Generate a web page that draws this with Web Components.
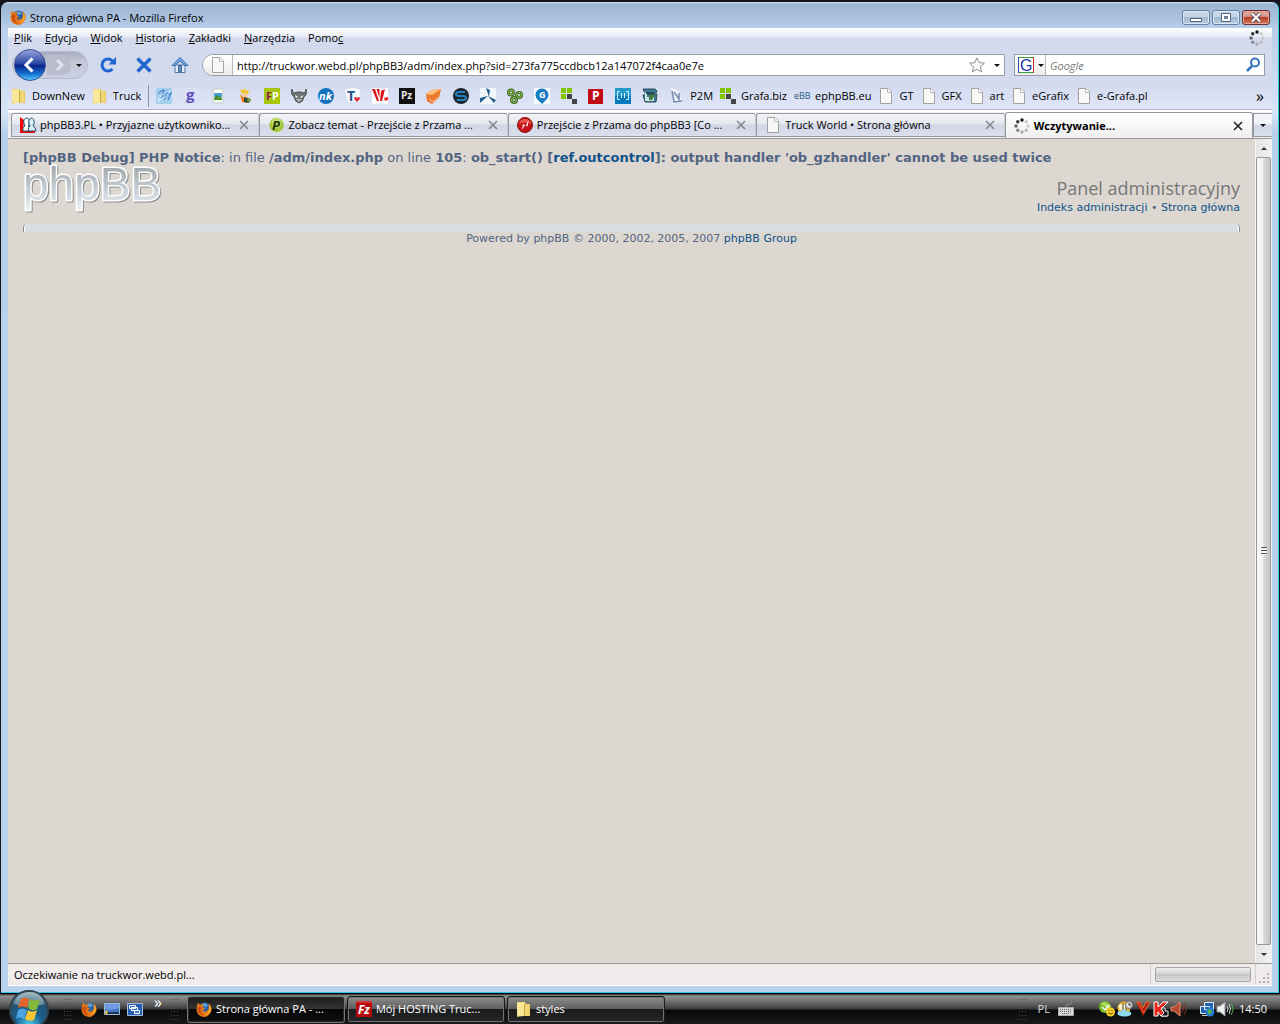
<!DOCTYPE html>
<html lang="pl">
<head>
<meta charset="utf-8">
<title>Strona główna PA</title>
<style>
  html, body { height: 100%; margin: 0; }
  body {
    --ui-font: "Open Sans", "Noto Sans", sans-serif;
    --page-font: "DejaVu Sans", sans-serif;
    display: flex;
    flex-direction: column;
    background: #15131c;
    color: #000;
    font: 11px/16px var(--ui-font);
    overflow: hidden;
  }
</style>
</head>
<body>

<browser-window caption="Strona główna PA - Mozilla Firefox">
  <menu-bar></menu-bar>
  <nav-bar url="http://truckwor.webd.pl/phpBB3/adm/index.php?sid=273fa775ccdbcb12a147072f4caa0e7e"></nav-bar>
  <bookmarks-bar></bookmarks-bar>
  <tab-strip>
    <browser-tab icon="phpbb">phpBB3.PL • Przyjazne użytkowniko...</browser-tab>
    <browser-tab icon="przemo">Zobacz temat - Przejście z Przama ...</browser-tab>
    <browser-tab icon="flash">Przejście z Przama do phpBB3 [Co ...</browser-tab>
    <browser-tab icon="page">Truck World • Strona główna</browser-tab>
    <browser-tab icon="throbber" active>Wczytywanie...</browser-tab>
  </tab-strip>
  <scroll-view>
    <admin-page></admin-page>
  </scroll-view>
  <status-bar>Oczekiwanie na truckwor.webd.pl...</status-bar>
</browser-window>

<task-bar>
  <task-button icon="firefox" active>Strona główna PA - ...</task-button>
  <task-button icon="filezilla">Mój HOSTING Truc...</task-button>
  <task-button icon="folder">styles</task-button>
</task-bar>

<script>
  const dots = (() => {
    const shades = ['#111', '#ccc', '#ccc', '#bbb', '#aaa', '#888', '#666', '#333'];
    return shades.map((c, i) => {
      const a = i * Math.PI / 4;
      return `<circle cx="${8 + 6 * Math.sin(a)}" cy="${8 - 6 * Math.cos(a)}" r="1.7" fill="${c}"/>`;
    }).join('');
  })();

  const label = (text, x, y, size, fill, extra = '') =>
    `<text x="${x}" y="${y}" font-size="${size}" fill="${fill}" font-family="Open Sans, sans-serif" font-weight="700" ${extra}>${text}</text>`;

  // every icon is drawn on a 16x16 grid
  const ICONS = {
    firefox: `
      <circle cx="8.5" cy="7.5" r="6" fill="#2b62a8"/><path d="M6 3q3-2 6 1l-2 2-3-.5z" fill="#5fa3d8"/>
      <path d="M1 5Q1 3 2.500 1.500L4 4Q6 2.500 8 3.500 6 5 6.500 6.500L9 7Q8.500 9 6.500 9 8 11.500 11 10 13.500 8 12.500 4L13 2.500Q17 7 15 11 12.500 16 8 16 1 15 .5 9Z" fill="#e87816"/>
      <path d="M1.500 8Q2.500 14 8 14.500 4.500 12 4.500 8.500L6 7 3 5Z" fill="#c94d10"/><path d="M13 3.500Q16 8 13.500 11.500 11.500 14 8.500 14 14 12 13.500 6Z" fill="#fcc53c"/>`,
    folder: `
      <path d="M1 1h8l1 2h4v12H4l-3 1z" fill="#e9c95e"/><path d="M1.500 1.500h7V15l-6 .5z" fill="#f9e797"/>
      <path d="M9 3l4 1v11H9z" fill="#f0d675"/><path d="M8.500 3v12" stroke="#c9a63d"/><path d="M2 2.500v12" stroke="#fff6c5"/>`,
    page: `<path d="M2.500.5h7.500l3.500 3.500v11.500h-11z" fill="#f8f8f6" stroke="#a2a2a0"/><path d="M9.500.5v4h4" fill="#fff" stroke="#b5b5b3"/>`,
    throbber: dots,
    phpbb: `
      <path d="M0 0l4 3-1 10h12v3H0z" fill="#f00707"/><path d="M3 14Q2 10 5 9 2 3 6 1q4 0 3 5 1 3-1 3 3 1 3 5z" fill="#fff" stroke="#24516d"/>
      <path d="M8 14Q8 10 10 9 7 3 11 1q4 0 3 6-1 2-1 2 3 1 3 5z" fill="#d7eef8" stroke="#24516d"/>`,
    przemo: `<circle cx="8.500" cy="8" r="7.200" fill="#a5c739"/><circle cx="8.500" cy="6" r="5" fill="#bfdb69"/>${label('P', 4, 13, 13, '#213304', 'font-style="italic"')}`,
    flash: `<circle cx="8" cy="8" r="7.500" fill="#c51214" stroke="#8d1010"/><path d="M8 2a6 5 0 0 1 6 5q-6-3-12 0a6 5 0 0 1 6-5" fill="#e75551"/><path d="M5 13l1-6 3 1.500L11.500 3 10.500 9.500 8 8z" fill="#fff"/>`,
    filezilla: `<path d="M0 0h16v16H0z" fill="#b40a0d"/><path d="M0 0h16v2H0z" fill="#d13334"/>${label('Fz', 2, 13, 12, '#fff', 'font-style="italic"')}`,
    feather: `<path d="M0 0h16v16H0z" fill="#a6cff0"/><path d="M2 6Q5 2 8 2L5 10Q9 3 13 2L8 12Q12 6 15 5L12 12" fill="none" stroke="#3f82c7" stroke-width="1.200"/><path d="M2 14q2-8 12-12-2 8-9 9z" fill="#6faee2" fill-opacity=".6" stroke="#e6f3fc"/>`,
    g: `<path d="M0 0h16v16H0z" fill="#dbe0f5"/>${label('g', 3, 12, 15, '#5b4eba')}`,
    photo: `<path d="M3 1h10v14H3z" fill="#f8faf8" stroke="#c5cac7"/><path d="M4 5h8v4H4z" fill="#469cd9"/><path d="M4 10l3-3 5 3v2H4z" fill="#4b9129"/>`,
    naruto: `<path d="M3 1l3 2 1-3 2 3 3-1-1 4H5z" fill="#f4c51c"/><path d="M5 5h5l1 4H6z" fill="#f5cd9c"/><path d="M3 6l3 3 6 1-2 5-5-1z" fill="#ee7e1c"/><path d="M7 9l6 2-1 4-5-1z" fill="#304b32"/><circle cx="12" cy="12" r="2" fill="#719c4a"/>`,
    fp: `<path d="M0 0h16v16H0z" fill="#a8c60d"/>${label('F<tspan fill="#fff">P</tspan>', 2, 12, 11, '#8d154b')}`,
    demon: `<path d="M1 1q0 4 3 4l2-1h4l2 1q3 0 3-4 2 5-2 8-1 5-5 6-4-1-5-6-4-3-2-8z" fill="#6f7477" stroke="#4d5356"/><path d="M4 7l3 2-2 1zM12 7L9 9l2 1z" fill="#fff"/><path d="M5 11h6l-3 3z" fill="#bbb"/>`,
    nk: `<circle cx="8" cy="8" r="8" fill="#1672bd"/>${label('nk', 1, 12, 11, '#fff', 'font-style="italic"')}`,
    theart: `<path d="M0 2q8-4 15 0v12H3z" fill="#f5f8fc"/>${label('T', 2, 13, 14, '#28527f')}<path d="M9 10q2-2 3 0 2-2 3 0 0 2-3 4-3-2-3-4" fill="#df3345"/>`,
    vred: `<path d="M0 0h16v16H0z" fill="#fff"/><path d="M0 1h3l4 12H5zM4.500 1h3v9zM9 3l4-2-3 12H8z" fill="#dc1217"/><path d="M12 10l4-1v3l-3 1z" fill="#e22"/>`,
    pz: `<path d="M0 0h16v16H0z" fill="#111"/>${label('Pz', 2, 11, 10, '#e8e8e8')}`,
    box: `<path d="M0 6l5-4 10-1-2 9-7 6-5-3z" fill="#ed762d"/><path d="M0 6l6 1 9-6-10 1z" fill="#ffc17c"/><path d="M3 11l4 3 6-5" fill="none" stroke="#fbd4a6"/>`,
    s: `<circle cx="8" cy="8" r="8" fill="#1d252d"/><path d="M12 4H6Q3 4 3 6t3 2h4q3 0 3 2t-3 2H4" fill="none" stroke="#2683c2" stroke-width="2"/>`,
    fan: `<path d="M0 0h16v16H0z" fill="#f4f7fa"/><path d="M6 0l4 2-1 7zM8 8l-8 7V10zM8 8l8 4-2 3z" fill="#24608f"/>`,
    links: `<g fill="none" stroke="#466f24" stroke-width="3"><circle cx="4" cy="4.500" r="2.500"/><circle cx="12" cy="7" r="2.500"/><circle cx="7" cy="12" r="2.500"/></g><g fill="none" stroke="#8cbb5c"><circle cx="4" cy="4.500" r="2.500"/><circle cx="12" cy="7" r="2.500"/><circle cx="7" cy="12" r="2.500"/></g>`,
    gpin: `<path d="M0 0h16v16H0z" fill="#f7fafe"/><path d="M8 16L4 12a6.500 6.500 0 1 1 8 0z" fill="#187cc3"/>${label('G', 5, 10, 9, '#fff')}`,
    blocks: `<path d="M0 0h5v5H0zM6 0h5v5H6zM0 6h5v5H0z" fill="#83c400"/><path d="M6 6h5v5H6zM11 11h5v5h-5z" fill="#444"/>`,
    p: `<path d="M0 1h15v15H0z" fill="#c20d16"/>${label('P', 4, 12, 12, '#fff')}`,
    brackets: `<path d="M0 0h16v16H0z" fill="#2698c9"/><path d="M0 8h16v8H0z" fill="#087ab9"/><path d="M5 3.500H2.500v8H5M11 3.500h2.500v8H11M6.500 5v5M9.500 5v5" fill="none" stroke="#d5f2ff"/>`,
    disk: `<path d="M1 1h12l2 2-1 2H3zM1 7l2 7h11l1-8z" fill="#3f7795" stroke="#244d5a"/><path d="M3 4h9v2H5v3h7v4H3z" fill="#cce6de"/><path d="M7 7h6l-3 5H7z" fill="#427c45"/><path d="M4 5h8" stroke="#204b57" stroke-width="2"/>`,
    sketch: `<path d="M2 0l8 3 3 11-9 2z" fill="#eef3fb"/><path d="M3 3l2 11 8-1M5 4l5 7V5" fill="none" stroke="#7488ae" stroke-width="1.500"/>`,
    ebb: label('eBB', 0, 11, 9, '#285987', 'style="font-weight:400"'),
    reload: `<path d="M12.500 12A6 6 0 1 1 12.500 4" fill="none" stroke="#1d66d3" stroke-width="3"/><path d="M16 0v7.500H8.500z" fill="#1d66d3"/>`,
    stop: `<path d="M1.500 1.500L14.500 14.500M14.500 1.500L1.500 14.500" stroke="#2167cf" stroke-width="3.500"/>`,
    home: `<path d="M3 8h10v7.500H3z" fill="#e5effb" stroke="#5078ad"/><path d="M8 .5L0 8.500h3L8 4l5 4.500h3z" fill="#73a5df" stroke="#386da9"/><path d="M6.500 8.500h3v6h-3z" fill="#6093c9" stroke="#3e6594"/>`,
    star: `<path d="M8 .8l2.200 4.800 5.200.6-3.900 3.500 1.100 5.200L8 12.300 3.400 14.900l1.100-5.200L.6 6.200l5.200-.6z" fill="#fafafa" stroke="#8e8e8e"/>`,
    lens: `<circle cx="10" cy="5.500" r="4" fill="#f8fcff" stroke="#3474b6" stroke-width="2"/><path d="M7 9l-5 5" stroke="#3474b6" stroke-width="2.500"/>`,
    google: `<path d="M.5.5h15v15H.5z" fill="#fff" stroke="#3d9b3d"/><path d="M.5 0v16" stroke="#2450b5"/><path d="M15.500 0v16" stroke="#c22c25"/><text x="2" y="13.500" font-size="16" font-family="Liberation Sans, sans-serif" fill="#1b37ab">G</text>`,
    close: `<path d="M4 4l8 8M12 4l-8 8" stroke="currentColor" stroke-width="1.600"/>`,
    desktop: `<path d="M.5 2.500h15v11H.5z" fill="#4276ca" stroke="#9fb8da"/><path d="M1 3h14v4q-6 3-14 1z" fill="#6b9ce1"/><path d="M1 11h14v2H1z" fill="#1d344f"/><path d="M2 9l2 2-2 3-1-2z" fill="#f5ca3b"/>`,
    switcher: `<path d="M.5 2.500h15v12H.5z" fill="#245db0" stroke="#a8bedc"/><path d="M2.500 4.500h6v3h-6zM4.500 6.500h6v3h-6zM7.500 9.500h5v3h-5z" fill="#3876c4" stroke="#fff"/>`,
    keyboard: `<path d="M8 6V4q5 0 6-3" fill="none" stroke="#929292"/><path d="M.5 6.500h15v8H.5z" fill="#d9d9d9" stroke="#aaa"/><path d="M2 8.500h12M2 10.500h12M4 12.500h8" stroke="#606060" stroke-dasharray="1 1"/>`,
    chat: `<circle cx="6" cy="6" r="6" fill="#74b928"/><path d="M2 3l3-2 7 4-2 3z" fill="#b9df63"/><path d="M3 6l3 3 4-5" fill="none" stroke="#fff" stroke-width="1.500"/><circle cx="11.500" cy="11" r="4.500" fill="#f8ce28"/><path d="M10 9v1M13 9v1M9 12q2.500 2 5 0" stroke="#604500" fill="none"/>`,
    weather: `<circle cx="7" cy="7" r="6.500" fill="#efb822"/><path d="M1 5q5-5 8 0v4H3z" fill="#fbefc2"/><path d="M6 2v8M9 2v8" stroke="#444"/><circle cx="12" cy="4" r="3.500" fill="#ddd" stroke="#777"/><path d="M12 2v2h2" stroke="#333" fill="none"/><path d="M1 14q-2-4 3-4 3-3 6 0 5 0 4 4-6 3-13 0" fill="#8edaf4"/>`,
    v: `<path d="M1 1h4l3 6 4-6h3L8 15z" fill="#b91d10"/><path d="M2 1h3l3 6 3-6h4l-6 11z" fill="none" stroke="#ee6c34"/>`,
    kaspersky: `<path d="M1 1h4v5l5-5h5L8 8l6 7H8L5 11v4H1z" fill="#e92619" stroke="#fff"/><path d="M8 7h4v3h3v5H8l3-3z" fill="#111" stroke="#eee"/>`,
    speakerRed: `<path d="M0 6h3l6-5v14l-6-5H0z" fill="#b64a31" stroke="#e48d6d"/><path d="M11 4q3 4 0 8M13 2q4 6 0 12" fill="none" stroke="#883223"/>`,
    network: `<path d="M5.500 1.500h9v7h-9zM1.500 5.500h9v7h-9z" fill="#1d61b4" stroke="#e7edf4"/><path d="M3 14.500h6" stroke="#ccc"/><circle cx="11" cy="11" r="4.500" fill="#2479d4"/><path d="M8 9l4-1 1 3-3 3z" fill="#52b849"/>`,
    speaker: `<path d="M0 5h3l5-4v14l-5-4H0z" fill="#e9eeee" stroke="#999"/><path d="M10 5q2 3 0 6M12 3q3 5 0 10" fill="none" stroke="#cce0d1"/><path d="M14 2q4 6 0 12" fill="none" stroke="#55ab50"/>`
  };

  const define = (name, html, setup) => {
    const template = document.createElement('template');
    template.innerHTML = html;
    customElements.define(name, class extends HTMLElement {
      constructor() {
        super();
        this.attachShadow({ mode: 'open' });
      }
      connectedCallback() {
        if (this.shadowRoot.childNodes.length) { return; }
        this.shadowRoot.appendChild(document.importNode(template.content, true));
        if (setup) { setup(this, this.shadowRoot); }
      }
    });
  };

  define('ui-icon', `
    <style>
      :host { display: block; flex: none; width: 16px; height: 16px; }
      svg { display: block; width: 100%; height: 100%; overflow: visible; }
    </style>
    <svg viewBox="0 0 16 16" aria-hidden="true"></svg>
  `, (el, root) => {
    root.querySelector('svg').innerHTML = ICONS[el.getAttribute('name')] || '';
  });

  define('browser-window', `
    <style>
      :host {
        box-sizing: border-box;
        flex: 1;
        min-height: 0;
        display: flex;
        flex-direction: column;
        margin: 2px 1px 0;
        padding: 0 6px 6px 7px;
        border-right: 1px solid #35c6e8;
        border-bottom: 1px solid #35c6e8;
        border-radius: 7px 7px 0 0;
        background: linear-gradient(#d5e3f3 0, #9db6d3 2px, #a8c0dc 14px, #b9cee9 27px, #d5e5f6 110px, #b9d0eb 130px, #b9d1ea);
      }
      header { flex: none; display: flex; align-items: center; height: 26px; padding: 0 2px; gap: 4px; }
      span { flex: 1; padding-top: 5px; }
      ui-icon { margin-top: 4px; }
      .controls { display: flex; gap: 2px; }
      button {
        display: grid;
        place-items: center;
        width: 28px;
        height: 15px;
        margin-top: 5px;
        padding: 0;
        border: 1px solid #6680a1;
        border-radius: 3px;
        background: linear-gradient(#c5d6e9 0 45%, #9fb8d1 50%, #b9cee3);
        box-shadow: inset 0 0 0 1px #dce8f4;
      }
      .close { border-color: #652c32; background: linear-gradient(#dba196 0 40%, #bb3e28 50%, #d07759); box-shadow: inset 0 0 0 1px #e3aa9c; }
      svg { display: block; }
      .client { flex: 1; min-height: 0; display: flex; flex-direction: column; background: #d3daed; }
    </style>
    <header>
      <ui-icon name="firefox"></ui-icon>
      <span></span>
      <div class="controls">
        <button aria-label="Minimalizuj"><svg width="12" height="11"><path d="M.5 6.500h11v3H.5z" fill="#fff" stroke="#53637a"/></svg></button>
        <button aria-label="Przywróć"><svg width="12" height="11"><path d="M1.500 1.500h9v8h-9z" fill="#fff" stroke="#53637a"/><path d="M4.500 4.500h3v2h-3z" fill="#a9bfd9" stroke="#53637a"/></svg></button>
        <button class="close" aria-label="Zamknij"><svg width="12" height="11"><path d="M2 1.500l8 8M10 1.500l-8 8" stroke="#5b5461" stroke-width="4"/><path d="M2 1.500l8 8M10 1.500l-8 8" stroke="#fff" stroke-width="2"/></svg></button>
      </div>
    </header>
    <div class="client"><slot></slot></div>
  `, (el, root) => {
    root.querySelector('span').textContent = el.getAttribute('caption');
  });

  define('menu-bar', `
    <style>
      :host { flex: none; display: flex; align-items: center; height: 20px; padding: 0 7px 0 6px; background: linear-gradient(#fff, #e6eaf5 45%, #d3daed 50%, #d3daed); }
      nav { flex: 1; display: flex; gap: 13px; }
      button { padding: 0; border: 0; background: none; font: inherit; color: inherit; }
    </style>
    <nav>
      <button><u>P</u>lik</button>
      <button><u>E</u>dycja</button>
      <button><u>W</u>idok</button>
      <button><u>H</u>istoria</button>
      <button><u>Z</u>akładki</button>
      <button><u>N</u>arzędzia</button>
      <button>Pomo<u>c</u></button>
    </nav>
    <ui-icon name="throbber"></ui-icon>
  `);

  define('nav-bar', `
    <style>
      :host { flex: none; display: flex; align-items: center; height: 34px; padding: 0 7px 0 4px; background: #d3daed; }
      button { padding: 0; border: 0; background: none; color: inherit; }
      .history {
        box-sizing: border-box;
        display: flex;
        align-items: center;
        width: 76px;
        height: 28px;
        border: 1px solid #b5bace;
        border-radius: 14px;
        background: linear-gradient(#a8acbd, #c5c9da 40%, #c9cfe1);
      }
      .back { flex: none; width: 34px; height: 34px; }
      .forward { flex: none; width: 24px; height: 20px; border-radius: 0 8px 8px 0; background: #b9bdcd; }
      svg { display: block; }
      .arrow { flex: none; width: 0; height: 0; border: 3px solid transparent; border-top-color: #111; border-bottom: 0; }
      .history .arrow { margin-left: 5px; }
      .tools { display: flex; gap: 20px; margin: 0 14px 0 12px; }
      .field { box-sizing: border-box; display: flex; align-items: center; height: 22px; border: 1px solid #9a9ca6; background: #fff; }
      .url { flex: 1; border-radius: 12px 0 0 12px; overflow: hidden; padding-right: 4px; }
      .ident { align-self: stretch; display: grid; place-items: center; width: 29px; border-right: 1px solid #b8b8b8; background: linear-gradient(#fff, #ececea); }
      input { flex: 1; min-width: 0; height: 18px; padding: 0 4px; border: 0; outline: 0; background: none; font: inherit; color: inherit; }
      .star { margin-right: 9px; }
      .search { width: 251px; margin-left: 9px; padding-right: 3px; }
      .engine { align-self: stretch; display: flex; align-items: center; gap: 4px; width: 31px; padding-left: 3px; border-right: 1px solid #b8b8b8; background: linear-gradient(#fff, #ececea); }
      input::placeholder { color: #777; font-style: italic; opacity: 1; }
    </style>
    <div class="history">
      <button class="back" aria-label="Wstecz">
        <svg width="34" height="34" viewBox="0 0 34 34">
          <defs><linearGradient id="b" x2="0" y2="1"><stop stop-color="#98a8de"/><stop offset=".47" stop-color="#2743a2"/><stop offset=".52" stop-color="#0a218a"/><stop offset=".8" stop-color="#1676d4"/><stop offset="1" stop-color="#5ed1ff"/></linearGradient></defs>
          <circle cx="17" cy="17" r="15.500" fill="url(#b)" stroke="#3c508e"/>
          <path d="M19.500 10.500L13 17l6.500 6.500" fill="none" stroke="#fff" stroke-width="3"/>
        </svg>
      </button>
      <button class="forward" aria-label="Dalej"><svg width="24" height="20"><path d="M10 5l5 5-5 5" fill="none" stroke="#e1e4ee" stroke-width="3"/></svg></button>
      <i class="arrow"></i>
    </div>
    <div class="tools">
      <button aria-label="Odśwież"><ui-icon name="reload"></ui-icon></button>
      <button aria-label="Zatrzymaj"><ui-icon name="stop"></ui-icon></button>
      <button aria-label="Strona startowa"><ui-icon name="home"></ui-icon></button>
    </div>
    <div class="field url">
      <div class="ident"><ui-icon name="page"></ui-icon></div>
      <input id="url" type="text" aria-label="Adres">
      <button class="star" aria-label="Dodaj zakładkę"><ui-icon name="star"></ui-icon></button>
      <i class="arrow"></i>
    </div>
    <div class="field search">
      <button class="engine" aria-label="Wyszukiwarka"><ui-icon name="google"></ui-icon><i class="arrow"></i></button>
      <input type="text" placeholder="Google" aria-label="Szukaj">
      <button aria-label="Szukaj"><ui-icon name="lens"></ui-icon></button>
    </div>
  `, (el, root) => {
    root.getElementById('url').value = el.getAttribute('url');
  });

  const BOOKMARKS = [
    ['folder', 'DownNew'], ['folder', 'Truck'], null,
    ['feather'], ['g'], ['photo'], ['naruto'], ['fp'], ['demon'], ['nk'], ['theart'], ['vred'], ['pz'],
    ['box'], ['s'], ['fan'], ['links'], ['gpin'], ['blocks'], ['p'], ['brackets'], ['disk'],
    ['sketch', 'P2M'], ['blocks', 'Grafa.biz'], ['ebb', 'ephpBB.eu'],
    ['page', 'GT'], ['page', 'GFX'], ['page', 'art'], ['page', 'eGrafix'], ['page', 'e-Grafa.pl']
  ];

  define('bookmarks-bar', `
    <style>
      :host { flex: none; display: flex; align-items: center; height: 27px; padding: 0 8px 0 3px; border-bottom: 1px solid #aeb4c6; background: linear-gradient(#d3daed, #e0e5f8); }
      nav { flex: 1; display: flex; align-items: center; }
      a { display: flex; align-items: center; gap: 5px; margin-right: 7px; color: inherit; text-decoration: none; white-space: nowrap; }
      a.bare { margin-right: 11px; }
      hr { width: 1px; height: 22px; margin: 0 7px 0 0; border: 0; background: #8c91a3; }
      button { padding: 0; border: 0; background: none; font: 16px/16px var(--ui-font); }
    </style>
    <nav></nav>
    <button aria-label="Więcej zakładek">»</button>
  `, (el, root) => {
    root.querySelector('nav').innerHTML = BOOKMARKS.map(item => {
      if (!item) { return '<hr>'; }
      const [icon, text] = item;
      return `<a href="#" class="${text ? '' : 'bare'}"><ui-icon name="${icon}"></ui-icon>${text ? `<span>${text}</span>` : ''}</a>`;
    }).join('');
  });

  define('tab-strip', `
    <style>
      :host { flex: none; display: flex; height: 29px; padding-left: 3px; border-bottom: 1px solid #999; background: linear-gradient(#fff 0 2px, #e4e4e8 3px, #f2f2f2); box-sizing: border-box; }
      slot { flex: 1; display: flex; }
      button { box-sizing: border-box; width: 19px; height: 24px; margin-top: 3px; padding: 0; display: grid; place-items: center; border: 1px solid #95979e; border-right: 0; background: linear-gradient(#f2f3f7 0 45%, #d2d7e6 50%, #d9deec); }
      i { border: 3px solid transparent; border-top-color: #111; border-bottom: 0; }
    </style>
    <slot></slot>
    <button aria-label="Lista kart"><i></i></button>
  `);

  define('browser-tab', `
    <style>
      :host {
        box-sizing: border-box;
        flex: 1 1 0;
        min-width: 0;
        display: flex;
        align-items: center;
        height: 24px;
        margin-top: 3px;
        padding: 0 6px 0 8px;
        border: 1px solid #95979e;
        border-right-color: #c9cbd2;
        border-radius: 3px 3px 0 0;
        background: linear-gradient(#f4f5f8, #e5e7ef 45%, #d1d6e5 50%, #dce0ed);
        color: #000;
      }
      :host([active]) { height: 26px; margin-top: 2px; border-bottom: 0; border-right-color: #95979e; background: linear-gradient(#fff, #efefef); font-weight: 700; }
      button { padding: 0; border: 0; background: none; font: inherit; color: inherit; }
      .title { flex: 1; min-width: 0; display: flex; align-items: center; gap: 4px; text-align: left; white-space: nowrap; overflow: hidden; }
      .close { color: #85878f; }
      :host([active]) .close { color: #222; }
    </style>
    <button class="title"><slot></slot></button>
    <button class="close" aria-label="Zamknij kartę"><ui-icon name="close"></ui-icon></button>
  `, (el, root) => {
    const icon = document.createElement('ui-icon');
    icon.setAttribute('name', el.getAttribute('icon'));
    root.querySelector('.title').prepend(icon);
  });

  define('scroll-view', `
    <style>
      :host { flex: 1; min-height: 0; display: flex; background: #dcd8d1; }
      .view { flex: 1; min-width: 0; overflow: hidden; }
      .track { flex: none; width: 16px; display: flex; flex-direction: column; border-left: 1px solid #f8f8f8; background: linear-gradient(90deg, #e4e4e4, #f3f3f3); }
      button { height: 18px; padding: 0; border: 0; background: none; display: grid; place-items: center; }
      .up { border: 3px solid transparent; border-bottom-color: #333; border-top: 0; }
      .down { border: 3px solid transparent; border-top-color: #333; border-bottom: 0; }
      .thumb { flex: 1; margin: 0 1px 0 0; display: grid; place-content: center; border: 1px solid #979797; border-radius: 2px; background: linear-gradient(90deg, #f5f5f5 0 40%, #d7d7da 55%, #c5c5c8); }
      .grip { width: 6px; height: 8px; background: repeating-linear-gradient(#555 0 1px, #f7f7f7 1px 3px); }
    </style>
    <div class="view"><slot></slot></div>
    <div class="track">
      <button aria-label="W górę"><i class="up"></i></button>
      <div class="thumb"><div class="grip"></div></div>
      <button aria-label="W dół"><i class="down"></i></button>
    </div>
  `);

  define('admin-page', `
    <style>
      :host { display: block; padding: 11px 15px; color: #536482; font: 11px/14px var(--page-font); }
      a { color: #105289; text-decoration: none; }
      .notice { font-size: 13px; line-height: 16px; white-space: nowrap; }
      header { display: flex; justify-content: space-between; align-items: flex-start; height: 58px; }
      .logo { display: block; overflow: visible; filter: drop-shadow(1px 1px 0 #8b8b8b); }
      .logo text { font: 46px "Liberation Sans", sans-serif; paint-order: stroke; }
      .heading { text-align: right; padding-top: 9px; }
      h1 { margin: 0; font: 18px/26px var(--ui-font); color: #767676; }
      .panel { height: 8px; box-sizing: border-box; border: solid #8c8c8c; border-width: 0 1px; border-radius: 4px 4px 0 0; background: #dadde2; box-shadow: inset 1px 0 #fff, inset -1px 0 #fff; }
      footer { line-height: 14px; text-align: center; }
    </style>
    <div class="notice"><b>[phpBB Debug] PHP Notice</b>: in file <b>/adm/index.php</b> on line <b>105</b>: <b>ob_start() [<a href="#">ref.outcontrol</a>]: output handler 'ob_gzhandler' cannot be used twice</b></div>
    <header>
      <svg class="logo" width="144" height="50" role="img" aria-label="phpBB">
        <defs>
          <linearGradient id="silver" gradientUnits="userSpaceOnUse" x1="0" y1="2" x2="0" y2="46"><stop stop-color="#a3abb0"/><stop offset=".7" stop-color="#d7dee3"/><stop offset="1" stop-color="#f3f6f8"/></linearGradient>
        </defs>
        <text x="0" y="34" fill="url(#silver)" stroke="#fff" stroke-width="3" stroke-linejoin="round">phpBB</text>
      </svg>
      <div class="heading">
        <h1>Panel administracyjny</h1>
        <a href="#">Indeks administracji</a> • <a href="#">Strona główna</a>
      </div>
    </header>
    <div class="panel"></div>
    <footer>Powered by phpBB © 2000, 2002, 2005, 2007 <a href="#">phpBB Group</a></footer>
  `);

  define('status-bar', `
    <style>
      :host { flex: none; box-sizing: border-box; display: flex; align-items: center; height: 23px; padding-left: 6px; border-top: 1px solid #999; border-bottom: 1px solid #fff; background: #f0eceb; }
      span { flex: 1; }
      .meter { align-self: stretch; display: flex; align-items: center; padding: 0 4px; border: solid #d2cfce; border-width: 0 1px; }
      .meter i { box-sizing: border-box; width: 96px; height: 15px; border: 1px solid #a5a5a5; border-radius: 2px; background: linear-gradient(#eee, #d6d6d6 45%, #c6c6c6 50%, #dedede); }
      svg { align-self: flex-end; margin: 0 2px 1px 3px; }
    </style>
    <span><slot></slot></span>
    <div class="meter"><i></i></div>
    <svg width="11" height="11" fill="#b5b1b0"><path d="M8 0h2v2H8zM4 4h2v2H4zM8 4h2v2H8zM0 8h2v2H0zM4 8h2v2H4zM8 8h2v2H8z"/></svg>
  `);

  define('task-bar', `
    <style>
      :host { flex: none; box-sizing: border-box; display: flex; align-items: center; height: 31px; padding: 0 13px 0 8px; border-top: 1px solid #000; background: linear-gradient(#2b2b2b 0, #909090 2px, #6d6d6d 8px, #3b3c3d 15px, #08090a 16px, #191a1c); color: #fff; }
      button { padding: 0; border: 0; background: none; font: inherit; color: inherit; }
      .orb { position: relative; width: 42px; height: 28px; margin-right: 14px; }
      .orb svg { position: absolute; left: 0; bottom: -7px; }
      .grip { flex: none; width: 8px; height: 21px; background: conic-gradient(from 270deg at 1px 1px, #4a4a4a 90deg, transparent 0) 0 0 / 3px 4px; }
      .quick { display: flex; align-items: center; gap: 7px; margin: 0 9px; }
      .quick .more { font-size: 16px; margin: -14px 0 0 4px; }
      .tasks { flex: 1; display: flex; gap: 2px; margin-left: 8px; }
      .tray { display: flex; gap: 2px; margin: 0 12px 0 25px; }
      .net { display: flex; gap: 2px; margin-right: 6px; }
      .lang { display: flex; align-items: center; gap: 8px; margin-left: 11px; color: #ddd; }
    </style>
    <button class="orb" aria-label="Start">
      <svg width="42" height="42" viewBox="0 0 42 42">
        <defs><radialGradient id="o" cx=".5" cy=".9" r=".9"><stop stop-color="#4bd2ef"/><stop offset=".4" stop-color="#175f91"/><stop offset=".75" stop-color="#27536d"/><stop offset="1" stop-color="#a5b9c3"/></radialGradient></defs>
        <circle cx="21" cy="22" r="19" fill="url(#o)" stroke="#31434e" stroke-width="2"/>
        <path d="M6 16Q9 5 21 4t15 12q-15 5-30 0" fill="#b5ccd5" opacity=".5"/>
        <path d="M13 11q4-3 8 0l-2 9q-4-3-9 0z" fill="#e8622b"/><path d="M22 11q4 3 10 0l-3 10q-5 3-9-1z" fill="#83bb38"/>
        <path d="M10 22q4-3 9 0l-3 9q-4-3-8 0z" fill="#49a4df"/><path d="M20 22q4 3 9 0l-3 10q-5 2-9-1z" fill="#fac632"/>
      </svg>
    </button>
    <i class="grip"></i>
    <div class="quick">
      <button aria-label="Mozilla Firefox"><ui-icon name="firefox"></ui-icon></button>
      <button aria-label="Pokaż pulpit"><ui-icon name="desktop"></ui-icon></button>
      <button aria-label="Przełącz okna"><ui-icon name="switcher"></ui-icon></button>
      <button class="more" aria-label="Więcej">»</button>
    </div>
    <i class="grip"></i>
    <div class="tasks"><slot></slot></div>
    <i class="grip"></i>
    <div class="lang"><span>PL</span><ui-icon name="keyboard"></ui-icon></div>
    <div class="tray">
      <ui-icon name="chat"></ui-icon><ui-icon name="weather"></ui-icon><ui-icon name="v"></ui-icon><ui-icon name="kaspersky"></ui-icon><ui-icon name="speakerRed"></ui-icon>
    </div>
    <div class="net"><ui-icon name="network"></ui-icon><ui-icon name="speaker"></ui-icon></div>
    <time>14:50</time>
  `);

  define('task-button', `
    <style>
      :host { display: block; width: 158px; }
      button {
        box-sizing: border-box;
        width: 100%;
        height: 27px;
        display: flex;
        align-items: center;
        gap: 4px;
        padding: 0 8px;
        border: 1px solid #1b1b1b;
        border-radius: 3px;
        background: linear-gradient(#8d8d8d, #5d5d5d 48%, #1b1c1d 50%, #252628);
        box-shadow: inset 0 0 0 1px #707070;
        color: #fff;
        font: inherit;
        white-space: nowrap;
        overflow: hidden;
      }
      :host([active]) button { background: linear-gradient(#1c1c1c, #353535 48%, #050505 50%, #111); box-shadow: inset 0 0 0 1px #292929; border-color: #777; }
    </style>
    <button><slot></slot></button>
  `, (el, root) => {
    const icon = document.createElement('ui-icon');
    icon.setAttribute('name', el.getAttribute('icon'));
    root.querySelector('button').prepend(icon);
  });
</script>
</body>
</html>
